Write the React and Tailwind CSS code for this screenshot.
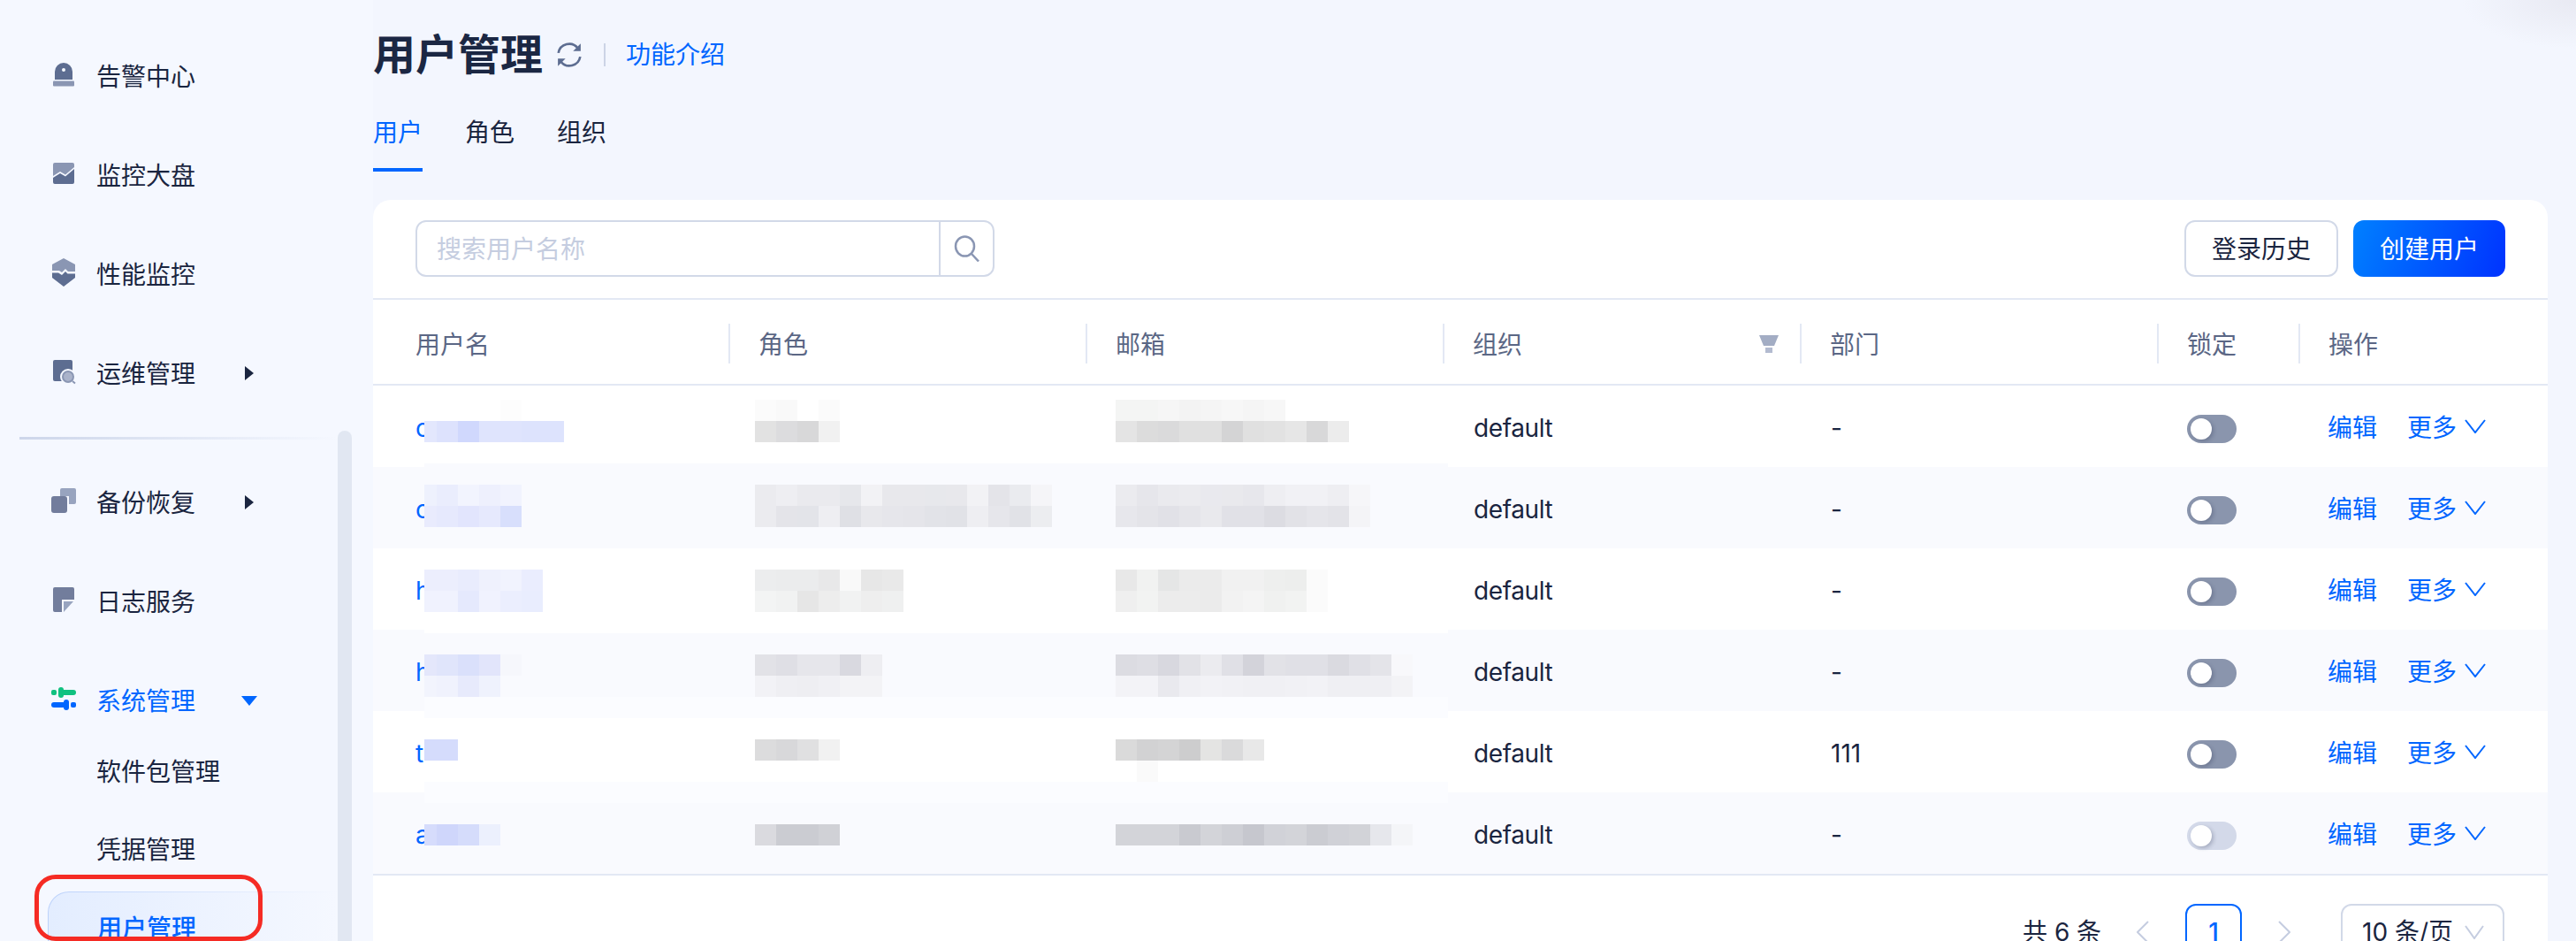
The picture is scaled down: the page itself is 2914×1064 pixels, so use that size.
import React from 'react';

const dim = '#5d6d91';
const mid = '#8a96b3';
const blue = '#0066ff';

function Icon({ children }) {
  return (
    <svg width="28" height="32" viewBox="0 0 28 32" className="shrink-0 -mt-1 overflow-visible">
      {children}
    </svg>
  );
}

const AlarmIcon = () => (
  <Icon>
    <path d="M4 22V13a10 10 0 0 1 20 0v9z" fill={dim} />
    <circle cx="14" cy="11" r="2" fill="#f5f8ff" />
    <rect x="2" y="23.5" width="24" height="6" rx="1" fill={mid} />
  </Icon>
);

const ChartIcon = () => (
  <Icon>
    <path d="M2 6a2 2 0 0 1 2-2h20a2 2 0 0 1 2 2v3l-10 8.5-6-3.5-8 5z" fill={mid} />
    <path d="M2 21l8-5 6 3.5 10-8.5v15a2 2 0 0 1-2 2H4a2 2 0 0 1-2-2z" fill={dim} />
  </Icon>
);

const ShieldIcon = () => (
  <Icon>
    <path d="M14 0l13 7v8h-8l-3-3-4 4-3-2H1V7z" fill={mid} />
    <path d="M1 16.5h7l4 2.5 4-4 2.500 2.500H27V22L14 32 1 22z" fill={dim} />
  </Icon>
);

const OpsIcon = () => (
  <Icon>
    <rect x="2" y="3" width="22" height="24" rx="2" fill={dim} />
    <circle cx="19" cy="22" r="9" fill="#f5f8ff" />
    <circle cx="19" cy="22" r="6" fill="#aab3ca" stroke={mid} strokeWidth="2" />
    <path d="M24 27l3 2.500" stroke={mid} strokeWidth="2" />
  </Icon>
);

const BackupIcon = () => (
  <Icon>
    <path d="M12 2h14a2 2 0 0 1 2 2v14a2 2 0 0 1-2 2h-6v-9H10V4a2 2 0 0 1 2-2z" fill="#98a4bf" />
    <rect x="0" y="11" width="18" height="19" rx="3" fill="#727d9c" />
  </Icon>
);

const LogIcon = () => (
  <Icon>
    <path d="M4 2h20a2 2 0 0 1 2 2v12H12v14H4a2 2 0 0 1-2-2V4a2 2 0 0 1 2-2z" fill="#727d9c" />
    <path d="M14 18h11L14 30z" fill="#98a4bf" />
  </Icon>
);

const SystemIcon = () => (
  <Icon>
    <rect x="0" y="6" width="6" height="6" rx="2" fill="#10c180" />
    <rect x="8" y="6" width="20" height="6" rx="3" fill="#10c180" />
    <rect x="8" y="3" width="6" height="12" rx="3" fill="#10c180" />
    <rect x="0" y="20" width="20" height="6" rx="3" fill={blue} />
    <rect x="14" y="17" width="6" height="12" rx="3" fill={blue} />
    <rect x="22" y="20" width="6" height="6" rx="2" fill={blue} />
  </Icon>
);

function MenuItem({ icon, label, caret, active }) {
  return (
    <div className="flex h-[112px] items-center pl-[58px] gap-[23px]">
      {icon}
      <span className={`w-[145px] pt-px text-[28px] ${active ? 'text-[#0066ff]' : 'text-[#1a2540]'}`}>{label}</span>
      {caret === 'right' && (
        <svg width="10" height="16" viewBox="0 0 10 16">
          <path d="M0 0l10 8-10 8z" fill="#1a2540" />
        </svg>
      )}
      {caret === 'down' && (
        <svg width="18" height="11" viewBox="0 0 18 11" className="-ml-1">
          <path d="M0 0h18L9 11z" fill={blue} />
        </svg>
      )}
    </div>
  );
}

function Sidebar() {
  return (
    <aside className="flex w-[422px] shrink-0">
      <nav className="w-[382px] pt-[30px]">
        <MenuItem icon={<AlarmIcon />} label="告警中心" />
        <MenuItem icon={<ChartIcon />} label="监控大盘" />
        <MenuItem icon={<ShieldIcon />} label="性能监控" />
        <MenuItem icon={<OpsIcon />} label="运维管理" caret="right" />
        <div className="ml-[22px] mt-4 mb-[15px] h-[3px] bg-[linear-gradient(90deg,#cdd6ea,#f5f8ff)]" />
        <MenuItem icon={<BackupIcon />} label="备份恢复" caret="right" />
        <MenuItem icon={<LogIcon />} label="日志服务" />
        <MenuItem icon={<SystemIcon />} label="系统管理" caret="down" active />
        <div className="flex h-12 items-center pl-[109px] pt-0.5 text-[28px] text-[#1a2540]">软件包管理</div>
        <div className="mt-10 flex h-12 items-center pl-[109px] pt-0.5 text-[28px] text-[#1a2540]">凭据管理</div>
        <div className="relative ml-[54px] mt-6 rounded-l-[24px] bg-[linear-gradient(90deg,#bcd2fb,#f5f8ff)] pl-px pt-px">
          <div className="flex h-[100px] items-start rounded-l-[23px] bg-[linear-gradient(90deg,#e3edff,#f5f8ff)] pl-[55px] pt-[20px] text-[28px] font-medium text-[#0066ff]">
            用户管理
          </div>
          <div className="absolute -left-[15px] -top-[19px] h-[75px] w-[258px] rounded-[24px] border-[5px] border-[#f52b24]" />
        </div>
      </nav>
      <div className="mt-[487px] h-[700px] w-4 rounded-lg bg-[#e1e7f2]" />
    </aside>
  );
}

const cols = 'grid grid-cols-[404px_404px_404px_404px_404px_160px_280px]';

// mosaic bands, 24px tall, first one starts 16px under the table head
const bands = {
  0: [['', '', '', '', '#fdfdfd'], ['#fbfbfb', '#f9f9f9', '#ffffff', '#fbfbfb'], ['#f4f5f4', '#f4f5f4', '#f6f6f6', '#f3f3f3', '#f5f5f5', '#f7f7f7', '#f5f5f5', '#f7f7f7']],
  1: [['#e3e7fd', '#dde2fd', '#d0d8fd', '#dfe4fd', '#dfe4fd', '#dde3fd', '#dde3fd'], ['#e2e2e2', '#dcdcde', '#d8d8d9', '#f1f1f1'], ['#e4e4e4', '#dcdcdc', '#dadadb', '#e0e0e0', '#e0e0e0', '#d4d4d5', '#e0e0e0', '#e2e2e2', '#e6e6e6', '#d8d8d9', '#ececec']],
  4: [['#eef1fd', '#eaedfd', '#f2f4fe', '#eef0fd', '#f1f3fe'], ['#ebebef', '#eeeef2', '#eaeaee', '#eaeaee', '#e6e7eb', '#f2f2f5', '#e8e8ec', '#e8e8ec', '#e7e8ec', '#e8e8ec', '#f2f2f5', '#e4e4e9', '#eaebef', '#f5f5f8'], ['#ebebef', '#e6e6eb', '#eaeaee', '#ebebef', '#e9e9ee', '#e9e9ed', '#e7e7ec', '#eeeef2', '#f1f1f5', '#f1f1f5', '#eeeef2', '#f6f6f9']],
  5: [['#e9ebfd', '#e6e9fd', '#e2e5fd', '#e6e9fd', '#d8dffc'], ['#ebebef', '#e4e4e9', '#e3e4e9', '#eeeef2', '#dfe0e5', '#e8e8ec', '#e6e6eb', '#e5e5ea', '#e2e3e8', '#e1e2e7', '#eeeef2', '#e6e6eb', '#e1e2e7', '#ecedf0'], ['#e7e7ec', '#e4e4e9', '#e1e1e7', '#e5e5ea', '#e9e9ed', '#e1e1e7', '#e1e1e7', '#dcdce2', '#e2e2e7', '#e5e5ea', '#e3e3e8', '#f4f4f7']],
  8: [['#eceefd', '#eceefd', '#e9ecfd', '#eff1fd', '#f1f3fe', '#eaedfe'], ['#ecedee', '#ebeced', '#ebeced', '#e8e8e9', '#f9f9f9', '#e7e7e7', '#e9e9e9'], ['#e8e8e8', '#f1f2f1', '#e5e6e6', '#ebebeb', '#ebebeb', '#f1f1f1', '#f1f1f1', '#eeefee', '#edeeed', '#fbfbfb']],
  9: [['#f0f2fe', '#f0f2fe', '#e5e9fd', '#f0f2fe', '#ebeefe', '#e9edfe'], ['#f3f4f4', '#f1f2f2', '#e6e6e6', '#ededed', '#f1f2f2', '#eeeeee', '#eff0f0'], ['#efefef', '#f2f3f2', '#ececec', '#ececec', '#ebebeb', '#f2f2f2', '#f4f4f4', '#f0f1f0', '#f2f3f2', '#fbfbfb']],
  12: [['#e4e7fb', '#e0e5fb', '#dae0fb', '#e2e5fb', '#f6f7fc'], ['#e2e2e7', '#dfdfe5', '#e6e6eb', '#e6e6eb', '#d9d9e0', '#eeeef2'], ['#dcdce2', '#dedee4', '#d8d8df', '#e2e2e7', '#ebebef', '#e0e0e6', '#d3d3da', '#e2e2e7', '#e0e0e6', '#e0e0e6', '#dadae0', '#e0e0e6', '#e4e4e9', '#f8f8fb']],
  13: [['#f2f4fd', '#f0f2fd', '#e7eafc', '#eff2fd'], ['#f2f2f6', '#efeff3', '#eeeef2', '#f0f0f4', '#f3f3f6', '#f3f3f6'], ['#f3f3f7', '#f3f3f7', '#e9e9ee', '#f0f0f4', '#f2f2f6', '#f1f1f5', '#f0f0f4', '#f0f0f4', '#f1f1f5', '#f2f2f6', '#efeff3', '#efeff3', '#efeff3', '#f3f3f6']],
  16: [['#d5dcfc', '#d5dcfc'], ['#dcdcdd', '#d8d8da', '#e0e0e1', '#f1f1f1'], ['#dadada', '#d2d2d3', '#d4d4d5', '#cdcdce', '#e4e4e3', '#dadadb', '#e8e8e8']],
  17: [[], [], ['', '#fafafa']],
  20: [['#d6dcfc', '#cfd6fb', '#d5dcfb', '#ecf0fd'], ['#dadadf', '#cbccd2', '#cbccd2', '#d0d1d6'], ['#d3d4d9', '#d3d4d9', '#d3d4d9', '#c9cad0', '#d3d4d9', '#cecfd5', '#c6c7ce', '#d1d2d8', '#d3d4d9', '#cbccd2', '#d0d1d7', '#d2d3d8', '#e6e7ec', '#f4f5f8']],
};

function bandBg(i) {
  if (i === 14 || i === 18) return '#fbfcff';
  if ((i >= 3 && i <= 6) || (i >= 11 && i <= 13) || i >= 19) return '#f9fafe';
  return '#ffffff';
}

function Mosaic() {
  const rows = Array.from({ length: 21 }, (_, i) => i);
  return (
    <div className="absolute left-[58px] top-4 w-[1158px]">
      {rows.map((i) => {
        const [a = [], b = [], c = []] = bands[i] || [];
        return (
          <div key={i} className="grid h-6 grid-cols-[374px_408px_1fr]" style={{ backgroundColor: bandBg(i) }}>
            <div className="flex">
              {a.map((color, k) => (
                <div key={k} className={k === 0 ? 'h-6 w-[14px]' : 'h-6 w-6'} style={{ backgroundColor: color || undefined }} />
              ))}
            </div>
            <div className="flex">
              {b.map((color, k) => (
                <div key={k} className="h-6 w-6" style={{ backgroundColor: color || undefined }} />
              ))}
            </div>
            <div className="flex">
              {c.map((color, k) => (
                <div key={k} className="h-6 w-6" style={{ backgroundColor: color || undefined }} />
              ))}
            </div>
          </div>
        );
      })}
    </div>
  );
}

function HeadCell({ label, first, last, children }) {
  return (
    <div
      className={`flex h-[45px] items-center justify-between ${first ? 'pl-12' : 'pl-[32px]'} ${last ? '' : 'border-r-2 border-[#e3e8f4]'} text-[28px] text-[#5b6785]`}
    >
      <span className="pt-0.5">{label}</span>
      {children}
    </div>
  );
}

const users = [
  { name: 'c', dept: '-' },
  { name: 'c', dept: '-' },
  { name: 'h', dept: '-' },
  { name: 'h', dept: '-' },
  { name: 't', dept: '111' },
  { name: 'a', dept: '-', disabled: true },
];

function Toggle({ disabled }) {
  return (
    <div className={`mt-0.5 flex h-8 w-14 items-center rounded-full pl-1 ${disabled ? 'bg-[#d3d9e9]' : 'bg-[#8a95ad]'}`}>
      <div className="h-6 w-6 rounded-full bg-white shadow-[2px_2px_4px_rgba(30,40,70,0.25)]" />
    </div>
  );
}

function Row({ user, striped }) {
  return (
    <div className={`${cols} h-[92px] items-center pt-1 text-[28px] text-[#1a2540] ${striped ? 'bg-[#f9fafe]' : ''}`}>
      <div className="pl-12 text-[#0066ff]">{user.name}</div>
      <div />
      <div />
      <div className="pl-[33px] tracking-[-0.4px]">default</div>
      <div className="pl-[33px]">{user.dept}</div>
      <div className="pl-[32px]">
        <Toggle disabled={user.disabled} />
      </div>
      <div className="flex items-center pl-[31px] text-[#0066ff]">
        <span>编辑</span>
        <span className="ml-[34px]">更多</span>
        <svg width="24" height="16" viewBox="0 0 24 16" fill="none" className="ml-[9px] -mt-1">
          <path d="M1 1l11 14L23 1" stroke={blue} strokeWidth="2" />
        </svg>
      </div>
    </div>
  );
}

function Card() {
  return (
    <div className="mt-8 flex-1 overflow-hidden rounded-t-[20px] bg-white">
      <div className="flex h-[113px] items-start justify-between border-b-2 border-[#e3e8f4] pl-12 pr-12 pt-[23px]">
        <div className="flex h-16 w-[655px] rounded-xl border-2 border-[#d2d9e8]">
          <div className="flex flex-1 items-center pl-[22px] pt-0.5 text-[28px] text-[#c5cde0]">搜索用户名称</div>
          <div className="flex w-[61px] items-center justify-center border-l-2 border-[#d2d9e8]">
            <svg width="30" height="30" viewBox="0 0 30 30" fill="none">
              <ellipse cx="12.500" cy="12.500" rx="10.500" ry="11" stroke={mid} strokeWidth="2.500" />
              <path d="M20 21l8 8.500" stroke={mid} strokeWidth="2.500" />
            </svg>
          </div>
        </div>
        <div className="flex gap-[17px]">
          <button className="h-16 w-[174px] rounded-xl border-2 border-[#d2d9e8] bg-white pt-0.5 text-[28px] text-[#1a2540]">登录历史</button>
          <button className="h-16 w-[172px] rounded-xl bg-[linear-gradient(110deg,#0080ff,#0033ff)] pt-0.5 text-[28px] text-white">创建用户</button>
        </div>
      </div>

      <div className={`${cols} h-[97px] items-center border-b-2 border-[#e3e8f4] pt-1`}>
        <HeadCell label="用户名" first />
        <HeadCell label="角色" />
        <HeadCell label="邮箱" />
        <HeadCell label="组织">
          <svg width="22" height="20" viewBox="0 0 22 20" className="mr-6">
            <path d="M0 0h22l-5 12H5z" fill="#a3adc4" />
            <rect x="7" y="14" width="8" height="6" fill="#b3bbd0" />
          </svg>
        </HeadCell>
        <HeadCell label="部门" />
        <HeadCell label="锁定" />
        <HeadCell label="操作" last />
      </div>

      <div className="relative border-b-2 border-[#e3e8f4]">
        {users.map((user, i) => (
          <Row key={i} user={user} striped={i % 2 === 1} />
        ))}
        <Mosaic />
      </div>

      <div className="flex items-start justify-end gap-4 pr-[49px] pt-8 text-[28px] text-[#1a2540]">
        <span className="flex h-16 w-[88px] items-center whitespace-nowrap">共 6 条</span>
        <div className="flex h-16 w-16 items-center justify-center">
          <svg width="14" height="26" viewBox="0 0 14 26" fill="none">
            <path d="M13 1L1 13l12 12" stroke="#c5cde0" strokeWidth="2" />
          </svg>
        </div>
        <div className="flex h-16 w-16 items-center justify-center rounded-xl border-2 border-[#0066ff] font-medium text-[#0066ff]">1</div>
        <div className="flex h-16 w-16 items-center justify-center">
          <svg width="14" height="26" viewBox="0 0 14 26" fill="none">
            <path d="M1 1l12 12L1 25" stroke="#c5cde0" strokeWidth="2" />
          </svg>
        </div>
        <div className="ml-4 flex h-16 w-[185px] items-center rounded-xl border-2 border-[#d2d9e8] pl-[22px]">
          <span className="whitespace-nowrap">10 条/页</span>
          <svg width="22" height="16" viewBox="0 0 22 16" fill="none" className="ml-auto mr-[21px]">
            <path d="M1 1l10 14L21 1" stroke="#c5cde0" strokeWidth="2" />
          </svg>
        </div>
      </div>
    </div>
  );
}

export default function App() {
  return (
    <div className="flex h-screen overflow-hidden bg-[#f5f8ff] font-['Inter','Noto_Sans_CJK_SC',sans-serif]">
      <Sidebar />
      <main className="flex min-w-0 flex-1 flex-col bg-[#f3f6fe] bg-[radial-gradient(ellipse_130px_55px_at_100%_0,#e8e9f2,transparent)] pr-8">
        <div className="mt-[26px] flex h-[72px] items-center">
          <h1 className="text-[48px] font-semibold text-[#1b2743]">用户管理</h1>
          <svg width="30" height="30" viewBox="0 0 28 28" fill="none" className="ml-[15px]">
            <path d="M2.500 12A11.500 11.500 0 0 1 23 7" stroke={dim} strokeWidth="2.500" />
            <path d="M25.500 16A11.500 11.500 0 0 1 5 21" stroke={dim} strokeWidth="2.500" />
            <path d="M26 2v8h-8z" fill={dim} />
            <path d="M2 26v-8h8z" fill={dim} />
          </svg>
          <div className="ml-[24px] h-[26px] w-0.5 bg-[#ccd4e6]" />
          <a className="ml-[23px] text-[28px] text-[#0066ff]">功能介绍</a>
        </div>
        <div className="flex gap-12 text-[28px] text-[#1a2540]">
          <div className="flex h-24 items-center border-b-4 border-[#0066ff] pt-3 text-[#0066ff]">用户</div>
          <div className="flex h-24 items-center pt-2">角色</div>
          <div className="flex h-24 items-center pt-2">组织</div>
        </div>
        <Card />
      </main>
    </div>
  );
}
